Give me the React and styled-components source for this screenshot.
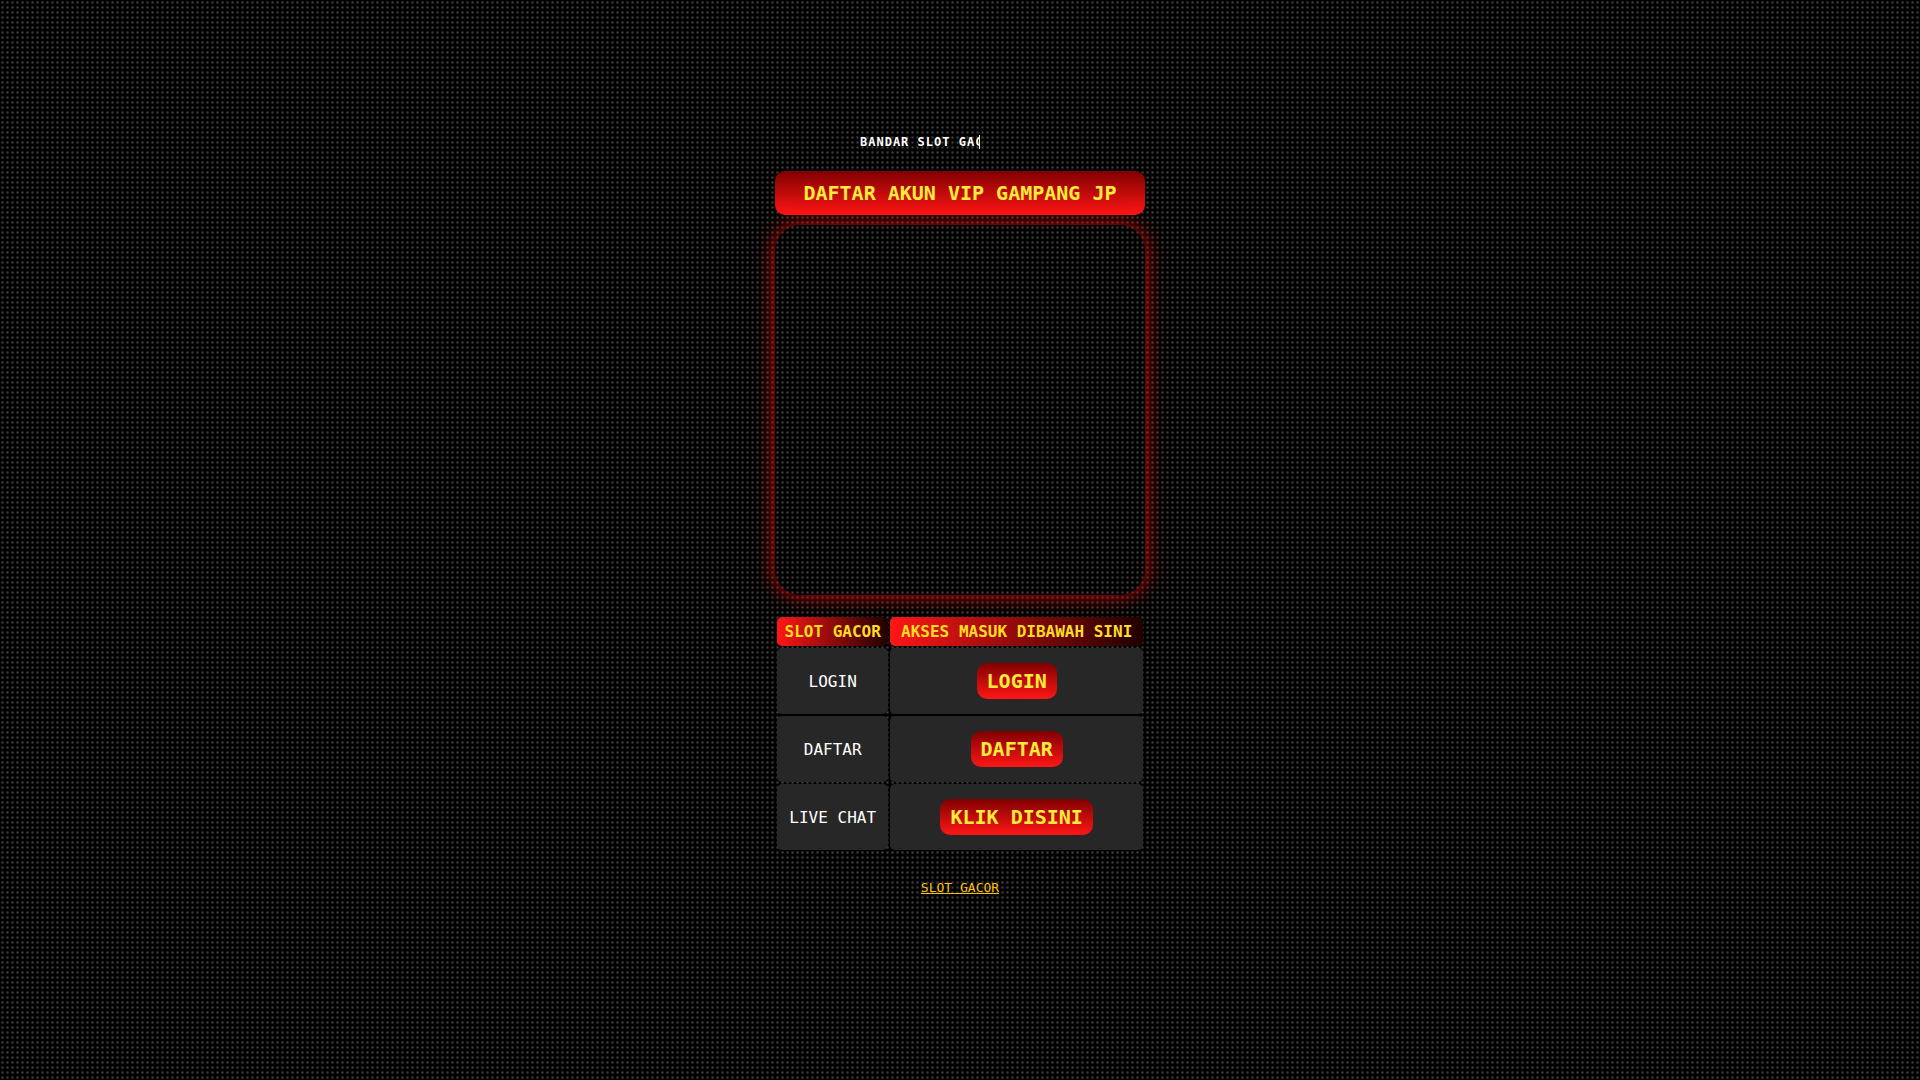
import styled, { createGlobalStyle } from "styled-components";

const GlobalStyle = createGlobalStyle`
  * {
    box-sizing: border-box;
  }
  body {
    margin: 0;
    min-height: 100vh;
    color: #fff;
    font-family: "DejaVu Sans Mono", monospace;
    background-color: #000;
    background-image: radial-gradient(#444 5%, #000 55%);
    background-size: 5px 5px;
  }
`;

const Page = styled.main`
  display: flex;
  flex-direction: column;
  align-items: center;
  width: 100%;
  max-width: 370px;
  margin: 0 auto;
  padding-top: 135px;
`;

const Typing = styled.h1`
  width: 200px;
  margin: 0 0 22px;
  font-size: 12px;
  line-height: 14px;
  letter-spacing: 1px;

  span {
    display: block;
    width: 60%;
    overflow: hidden;
    white-space: nowrap;
    border-right: 1px solid #fff59d;
  }
`;

const Button = styled.button`
  padding: 6px 10px;
  border: none;
  border-radius: 10px;
  color: #ffeb3b;
  font-family: inherit;
  font-size: 20px;
  font-weight: 700;
  line-height: 24px;
  background: linear-gradient(to bottom, #800000, #ff1616);
  cursor: pointer;
`;

const WideButton = styled(Button)`
  width: 100%;
  padding: 10px;
`;

const Banner = styled.div`
  width: 100%;
  aspect-ratio: 1;
  margin: 10px 0 20px;
  border-radius: 25px;
  box-shadow: 0 0 20px rgba(255, 0, 0, 0.8);
`;

const Table = styled.table`
  width: 100%;
  border-spacing: 2px;
  text-align: center;
  font-size: 16px;
  line-height: 19px;

  th {
    padding: 5px;
    border-radius: 5px;
    color: #ffde21;
    background: linear-gradient(to right, #ff1616, #200000);
  }
  td {
    height: 66px;
    padding: 5px;
    border-radius: 5px;
    background-color: #272727;
  }
`;

const FooterLink = styled.a`
  margin-top: 28px;
  color: #ffc107;
  font-size: 13px;
  line-height: 15px;
`;

const rows = [
  { label: "LOGIN", button: "LOGIN" },
  { label: "DAFTAR", button: "DAFTAR" },
  { label: "LIVE CHAT", button: "KLIK DISINI" },
];

function App() {
  return (
    <>
      <GlobalStyle />
      <Page>
        <Typing>
          <span>BANDAR SLOT GACOR</span>
        </Typing>
        <WideButton type="button">DAFTAR AKUN VIP GAMPANG JP</WideButton>
        <Banner />
        <Table>
          <thead>
            <tr>
              <th>SLOT GACOR</th>
              <th>AKSES MASUK DIBAWAH SINI</th>
            </tr>
          </thead>
          <tbody>
            {rows.map((row) => (
              <tr key={row.label}>
                <td>{row.label}</td>
                <td>
                  <Button type="button">{row.button}</Button>
                </td>
              </tr>
            ))}
          </tbody>
        </Table>
        <FooterLink href="#">SLOT GACOR</FooterLink>
      </Page>
    </>
  );
}

export default App;
